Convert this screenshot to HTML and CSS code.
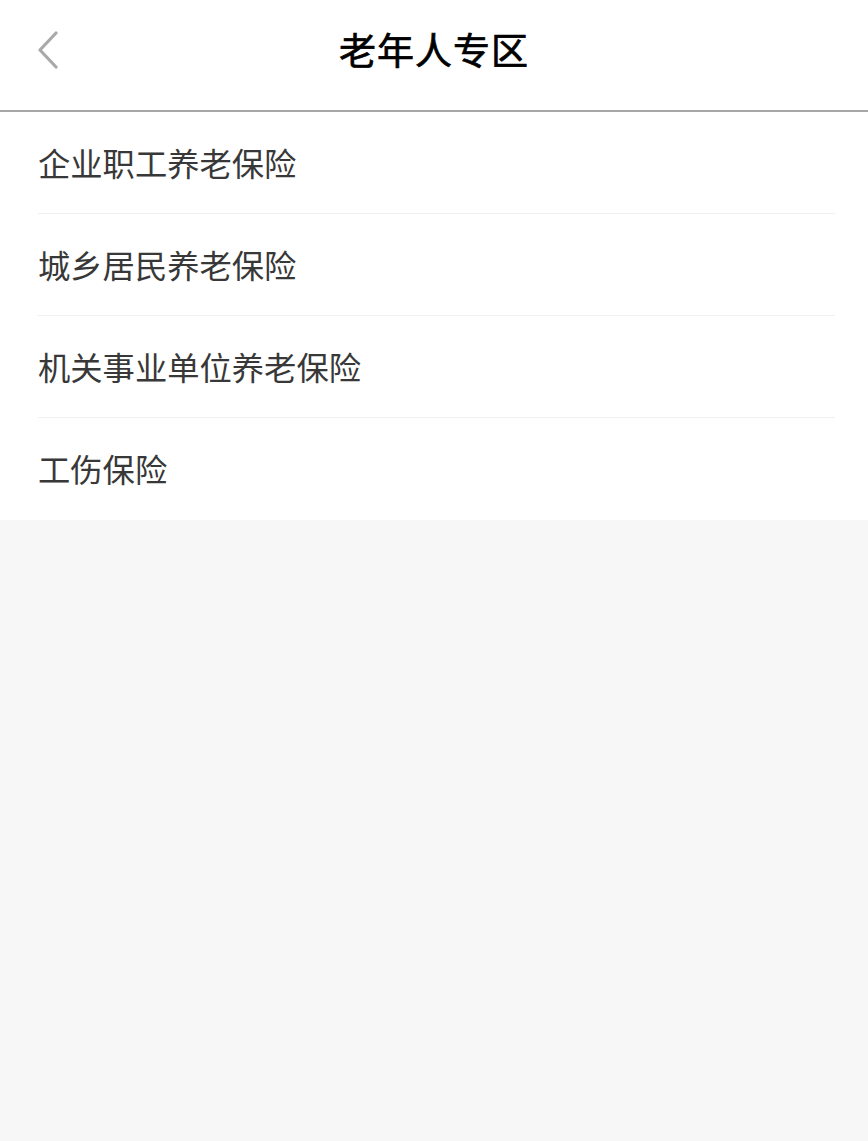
FILE: index.html
```html
<!DOCTYPE html>
<html lang="zh-CN">
<head>
<meta charset="utf-8">
<title>老年人专区</title>
<link rel="stylesheet" href="styles.css">
</head>
<body>
<header class="nav">
  <button class="back" aria-label="返回">
    <svg width="22" height="38" viewBox="0 0 22 38"><polyline points="19,2 3,19 19,36" fill="none" stroke="#a9a9ab" stroke-width="3.2" stroke-linecap="round" stroke-linejoin="round"/></svg>
  </button>
  <h1 class="title">老年人专区</h1>
</header>
<ul class="list">
  <li class="item">企业职工养老保险</li>
  <li class="item">城乡居民养老保险</li>
  <li class="item">机关事业单位养老保险</li>
  <li class="item">工伤保险</li>
</ul>
</body>
</html>
```
FILE: styles.css
```css
html, body {
  margin: 0;
  padding: 0;
  background: #f7f7f7;
  font-family: "Noto Sans CJK SC", "Noto Sans", sans-serif;
  min-height: 100%;
}
.nav {
  position: relative;
  height: 110px;
  background: #fff;
  border-bottom: 2px solid #a6a6a6;
  display: flex;
  align-items: center;
  justify-content: center;
}
.back {
  position: absolute;
  left: 37px;
  top: 31px;
  padding: 0;
  border: 0;
  background: none;
  display: block;
}
.back svg { display: block; }
.title {
  margin: 0;
  font-size: 37px;
  font-weight: 400;
  -webkit-text-stroke: 0.7px #000;
  color: #000;
  letter-spacing: 1px;
  transform: translateY(-6px);
}
.list {
  list-style: none;
  margin: 0;
  padding: 0 33px 0 38px;
  background: #fff;
}
.item {
  height: 101px;
  line-height: 100px;
  font-size: 32.3px;
  color: #383838;
  border-bottom: 1px solid #f0f0f0;
}
.item:last-child { border-bottom: 0; height: 102px; }
```
